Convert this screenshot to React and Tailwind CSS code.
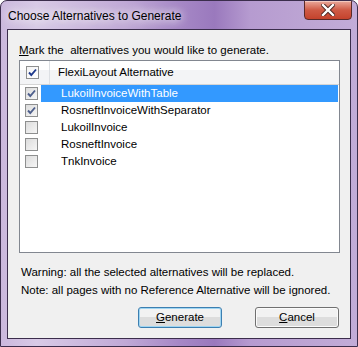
import React from 'react';

const font = { fontFamily: '"Liberation Sans", Arial, sans-serif' };

const Check = ({ checked, header }) => (
  <span
    className={`inline-flex h-[13px] w-[13px] shrink-0 items-center justify-center border border-[#8e8f8f] ${
      header
        ? 'bg-gradient-to-br from-[#f4f4f4] to-[#ffffff]'
        : 'bg-gradient-to-br from-[#dcdcdc] to-[#f6f6f6]'
    }`}
  >
    {checked && (
      <svg width="11" height="11" viewBox="0 0 11 11">
        <polyline
          points="2,5.5 4.3,8 9,2.5"
          fill="none"
          stroke={header ? '#1f3a8c' : '#4e5f8c'}
          strokeWidth="1.9"
        />
      </svg>
    )}
  </span>
);

const rows = [
  { name: 'LukoilInvoiceWithTable', checked: true, selected: true },
  { name: 'RosneftInvoiceWithSeparator', checked: true },
  { name: 'LukoilInvoice' },
  { name: 'RosneftInvoice' },
  { name: 'TnkInvoice' },
];

const Button = ({ children, primary }) => (
  <button
    className={`h-[21px] w-[84px] rounded-[3px] border text-[11.5px] leading-none text-black bg-gradient-to-b from-[#f2f2f2] from-50% to-[#dddddd] to-50% ${
      primary ? 'border-[#3c7fb1] shadow-[inset_0_0_0_1px_#9fd5f2]' : 'border-[#707070] shadow-[inset_0_0_0_1px_#fbfbfb]'
    }`}
  >
    {children}
  </button>
);

export default function App() {
  return (
    <div
      className="relative h-[347px] w-[358px] overflow-hidden rounded-t-[7px] border border-[#3b2d4c] bg-[linear-gradient(90deg,#cbb8dd_0%,#d8cae6_10%,#c0a9d6_35%,#a688c6_50%,#9a79bd_60%,#b69bd0_70%,#bca4d3_85%,#c2acd8_100%)] px-[6px] pb-[7px] pt-[28px] text-[11.5px] text-black"
      style={font}
    >
      <div className="absolute left-[7px] top-[6px] text-[12px] leading-[18px] text-black [text-shadow:0_0_8px_#ffffff,0_0_12px_#ffffff]">
        Choose Alternatives to Generate
      </div>
      <div className="absolute right-[5px] top-[-1px] flex h-[20px] w-[48px] items-center justify-center rounded-b-[4px] border border-[#5a2a28] bg-gradient-to-b from-[#e9a99c] via-[#cf5a45] to-[#c4422c] shadow-[inset_0_1px_0_#f3c9bf]">
        <svg width="14" height="12" viewBox="0 0 14 12">
          <path d="M2 1 L12 11 M12 1 L2 11" stroke="#4a2420" strokeWidth="4.2" strokeLinecap="square" />
          <path d="M2 1 L12 11 M12 1 L2 11" stroke="#ffffff" strokeWidth="2.4" strokeLinecap="square" />
        </svg>
      </div>

      <div className="flex h-full flex-col border border-[#3b2d4c] bg-[#f0f0f0] pl-[11px] pr-[10px]">
        <div className="mt-[12px] leading-[16px] whitespace-nowrap">
          <span className="underline">M</span>ark the&nbsp; alternatives you would like to generate.
        </div>

        <div className="mt-[2px] h-[193px] border border-[#828790] bg-white">
          <div className="flex h-[24px] border-b border-[#d5d5d5] bg-[linear-gradient(#ffffff_0%,#ffffff_40%,#f3f4f6_41%,#f3f4f6_100%)]">
            <div className="flex w-[30px] items-center border-r border-[#dde0e4] pl-[6px]">
              <Check checked header />
            </div>
            <div className="flex items-center pl-[8px]">FlexiLayout Alternative</div>
          </div>
          {rows.map((r) => (
            <div key={r.name} className="flex h-[17px] items-center">
              <div className="flex w-[21px] items-center pl-[5px]">
                <Check checked={r.checked} />
              </div>
              <div
                className={`flex h-full flex-1 items-center pl-[20px] ${
                  r.selected ? 'mr-px bg-[#3399ff] text-white' : ''
                }`}
              >
                {r.name}
              </div>
            </div>
          ))}
        </div>

        <div className="mt-[10px] whitespace-nowrap pl-[2px] leading-[18px]">
          Warning: all the selected alternatives will be replaced.
        </div>
        <div className="whitespace-nowrap pl-[2px] leading-[18px]">
          Note: all pages with no Reference Alternative will be ignored.
        </div>

        <div className="mt-[8px] flex justify-end gap-[33px] pr-[1px]">
          <Button primary>
            <span className="underline">G</span>enerate
          </Button>
          <Button>
            <span className="underline">C</span>ancel
          </Button>
        </div>
      </div>
    </div>
  );
}
